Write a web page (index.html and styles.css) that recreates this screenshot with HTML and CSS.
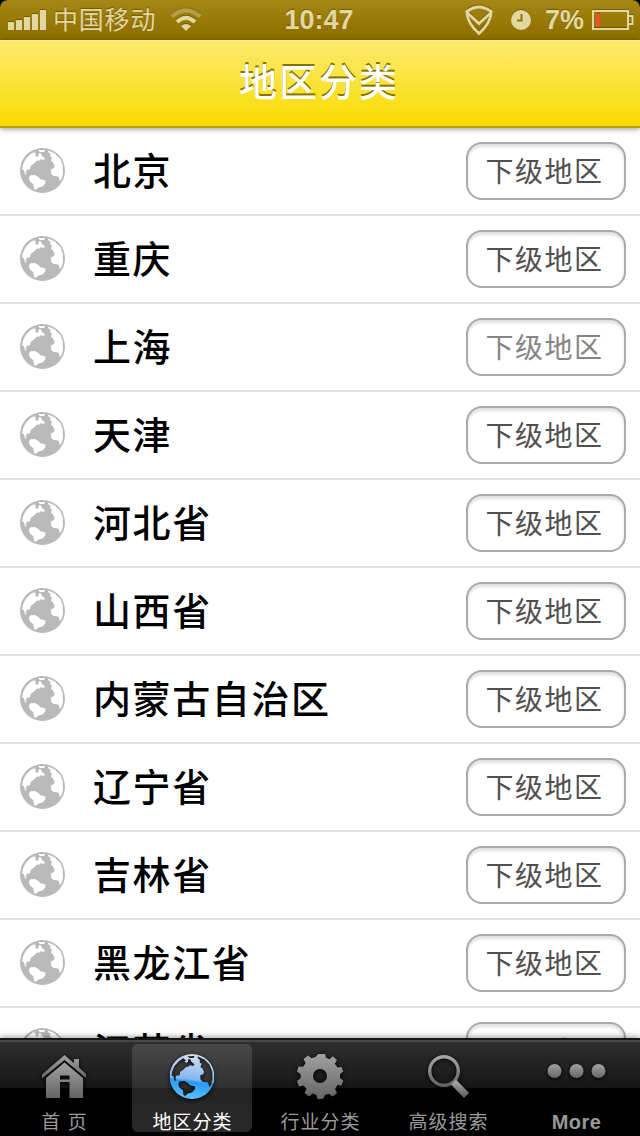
FILE: index.html
```
<!DOCTYPE html>
<html lang="zh-CN">
<head>
<meta charset="utf-8">
<title>地区分类</title>
<link rel="stylesheet" href="styles.css">
</head>
<body>
<svg class="defs" aria-hidden="true">
  <defs>
    <symbol id="globe" viewBox="0 0 45 45">
      <path fill-rule="evenodd" d="M22.5 0A22.5 22.5 0 1 1 22.5 45A22.5 22.5 0 1 1 22.5 0Z
      M14 4L9.500 7L5 12L2.500 18L2.200 22L3.800 22L5 26.500L6.500 26.500L6 23.500L7 21.500L9.500 21.500L10.500 20L10.500 18L14 15.500L16.500 13L19.500 12.500L20.500 11L23 12L25 11L23.500 9L22 8L21 5.500L19 5L18.500 7.500L17 9L15 7.500L16.500 6L15 5.500Z
      M18 2.300L25 2L24 4L20 4Z
      M10 27.500L15 27L19 29.500L20 31L25.500 32.500L25.500 35L22.500 38.500L18.500 39.500L15.500 42L13.800 40.500L13.500 36.500L10 33.500L8.800 30.500Z
      M28 2.200L35 5.500L40 10.500L42.800 17.500L43 26L41.500 31L39.800 33L38.500 28.500L33.500 28L31 25.500L30.800 21.500L34 20L34.500 17.500L33 14.500L31 13L32 10L30 8L30.500 6L28.500 4.500Z"/>
    </symbol>
    <linearGradient id="blue" x1="0" y1="0" x2="-.12" y2="1">
      <stop offset="0" stop-color="#cbdcf5"/><stop offset=".5" stop-color="#84b4ee"/>
      <stop offset=".55" stop-color="#259af5"/><stop offset="1" stop-color="#63c8ff"/>
    </linearGradient>
    <linearGradient id="metal" x1="0" y1="0" x2="0" y2="1">
      <stop offset="0" stop-color="#a3a3a3"/><stop offset="1" stop-color="#646464"/>
    </linearGradient>
    <mask id="globe-mask"><use href="#globe" width="45" height="45" fill="#fff"/></mask>
  </defs>
</svg>
<div class="screen">
  <div class="status">
    <div class="carrier">
      <svg width="38" height="20" viewBox="0 0 38 20" fill="currentColor"><path d="M0 12h6v8H0zM8 10h6v10H8zM16 7h6v13h-6zM24 4h6v16h-6zM32 0h6v20h-6z"/></svg>
      <span class="network">中国移动</span>
      <svg class="wifi" width="32" height="24" viewBox="0 0 32 24"><path d="M2 8.500Q16-4 30 8.500" fill="none" stroke="currentColor" stroke-width="4" opacity=".45"/><path d="M7 14Q16 5.500 25 14" fill="none" stroke="currentColor" stroke-width="4"/><path d="M11 18Q16 14 21 18L16 23Z" fill="currentColor"/></svg>
    </div>
    <span class="time">10:47</span>
    <div class="indicators">
      <svg width="28" height="31" viewBox="0 0 28 31" fill="none" stroke="currentColor" stroke-width="2.800"><path d="M1.800 6.500Q14-2.500 26.200 6.500Q26 18 14 28.500Q2 18 1.800 6.500Z"/><path d="M2.500 8L14 18.500L25.500 8"/></svg>
      <svg class="clock" width="20" height="20" viewBox="0 0 20 20"><circle cx="10" cy="10" r="10" fill="currentColor"/><path d="M10.500 4v6.500H6" fill="none" stroke="#927300" stroke-width="2"/></svg>
      <span class="percent">7%</span>
      <svg class="battery" width="42" height="21" viewBox="0 0 42 21"><path d="M1 1h35v18H1zM37 6h3.500v8H37" fill="none" stroke="currentColor" stroke-width="2"/><path d="M4 3.500h4v13H4z" fill="#ec5424"/></svg>
    </div>
  </div>
  <header class="header"><h1 class="title">地区分类</h1></header>
  <main class="list">
    <div class="row"><svg class="globe"><use href="#globe"/></svg><span class="name">北京</span><button class="sub">下级地区</button></div>
    <div class="row"><svg class="globe"><use href="#globe"/></svg><span class="name">重庆</span><button class="sub">下级地区</button></div>
    <div class="row"><svg class="globe"><use href="#globe"/></svg><span class="name">上海</span><button class="sub sub-dim">下级地区</button></div>
    <div class="row"><svg class="globe"><use href="#globe"/></svg><span class="name">天津</span><button class="sub">下级地区</button></div>
    <div class="row"><svg class="globe"><use href="#globe"/></svg><span class="name">河北省</span><button class="sub">下级地区</button></div>
    <div class="row"><svg class="globe"><use href="#globe"/></svg><span class="name">山西省</span><button class="sub">下级地区</button></div>
    <div class="row"><svg class="globe"><use href="#globe"/></svg><span class="name">内蒙古自治区</span><button class="sub">下级地区</button></div>
    <div class="row"><svg class="globe"><use href="#globe"/></svg><span class="name">辽宁省</span><button class="sub">下级地区</button></div>
    <div class="row"><svg class="globe"><use href="#globe"/></svg><span class="name">吉林省</span><button class="sub">下级地区</button></div>
    <div class="row"><svg class="globe"><use href="#globe"/></svg><span class="name">黑龙江省</span><button class="sub">下级地区</button></div>
    <div class="row"><svg class="globe"><use href="#globe"/></svg><span class="name">江苏省</span><button class="sub">下级地区</button></div>
  </main>
  <nav class="tabs">
    <div class="tab"><svg class="icon" viewBox="0 0 48 48" fill="url(#metal)"><path d="M2 20.500L24.500 1L34 9.200V5h5v8.500L46 20v4L24.500 6L2 24.500Z"/><path fill-rule="evenodd" d="M6 24L24.500 8.500L43 24V44H29.500V28H20V44H6ZM20 21.500V25.500H29.500V21.500Z"/></svg><span class="label">首 页</span></div>
    <div class="tab tab-on"><svg class="icon" viewBox="-1.5 0 48 48"><rect width="45" height="45" fill="url(#blue)" mask="url(#globe-mask)"/></svg><span class="label">地区分类</span></div>
    <div class="tab"><svg class="icon" viewBox="-24 -22 48 48"><defs><mask id="hole"><rect x="-24" y="-24" width="48" height="48" fill="#fff"/><circle r="7" fill="#000"/></mask></defs><g mask="url(#hole)"><path fill="url(#metal)" d="M-.8-23H5L5.800-18.500L9.500-16.800L12.800-19.800L17-16L14.800-12.200L17.500-8.500L21.500-9L23.300-4.500L20-1.800V2L23.300 4.500L21.500 9.500L17.500 9L15 13L17 17L12.500 20.500L9 17.800L5 19L3 23H-2.500L-3.500 19L-7.500 17.500L-11 20.500L-15.500 17L-13.500 12.800L-16.500 9.500L-21 10.500L-23 5L-19.200 2L-19.500-1.800L-23-4.500L-21.500-9.500L-16.800-9.200L-14.500-13L-16.500-17L-12-20.500L-8.500-17.800L-4.500-19Z"/></g></svg><span class="label">行业分类</span></div>
    <div class="tab"><svg class="icon" viewBox="0 0 48 48" fill="none" stroke="url(#metal)"><circle cx="20" cy="17" r="14.300" stroke-width="3.400"/><path d="M29.500 28L42.500 41.500" stroke-width="7"/></svg><span class="label">高级搜索</span></div>
    <div class="tab"><svg class="icon icon-wide" viewBox="0 0 60 48" fill="url(#metal)"><circle cx="8.500" cy="17" r="7"/><circle cx="30.500" cy="17" r="7"/><circle cx="52.500" cy="17" r="7"/></svg><span class="label label-latin">More</span></div>
  </nav>
</div>
</body>
</html>
```
FILE: styles.css
```
* { box-sizing: border-box; }
body { margin: 0; background: #000; font-family: "Liberation Sans", "Noto Sans CJK SC", sans-serif; }
.defs { position: absolute; width: 0; height: 0; }
.screen { width: 640px; height: 1136px; display: flex; flex-direction: column; overflow: hidden; }
.status { height: 40px; flex: none; display: grid; grid-template-columns: 1fr auto 1fr; align-items: center; padding: 0 6px 0 8px; border-radius: 8px 8px 0 0; background: linear-gradient(#a68717, #937300 75%, #907000); color: #e1d7a0; }
.status svg { filter: drop-shadow(0 -1px 0 rgba(70, 50, 0, .45)); }
.carrier, .indicators { display: flex; align-items: center; }
.network { margin-left: 7px; font-size: 25px; letter-spacing: .8px; line-height: 40px; text-shadow: 0 -1px 1px #745900; }
.wifi { margin-left: 14px; }
.time, .percent { font-size: 27px; font-weight: bold; line-height: 40px; text-shadow: 0 -1px 1px #745900; }
.time { padding-right: 4px; }
.indicators { justify-content: flex-end; }
.clock { margin-left: 18px; }
.percent { margin-left: 14px; }
.battery { margin-left: 8px; }
.header { height: 88px; flex: none; display: flex; justify-content: center; background: linear-gradient(#fbea6e, #f9dc06 94%); border-top: 1px solid #ffef8b; border-bottom: 2px solid #b5a000; box-shadow: 0 1px 6px rgba(0, 0, 0, .4); position: relative; }
.title { margin: 0; font-size: 38px; font-weight: 500; line-height: 85px; letter-spacing: 2px; padding-right: 2px; color: #fff; text-shadow: 0 -2px 0 #847300; }
.list { flex: 1; min-height: 0; overflow: hidden; background: #fff; }
.row { height: 88px; display: flex; align-items: center; padding: 0 14px 0 20px; border-bottom: 2px solid #e0e0e0; }
.globe { width: 45px; height: 45px; flex: none; margin-bottom: 1px; fill: #b9b9b9; }
.name { flex: 1; margin-left: 28px; padding-top: 3px; font-size: 38px; font-weight: 500; letter-spacing: 1.600px; line-height: 83px; color: #000; }
.sub { width: 160px; height: 58px; padding: 3px 3px 0 0; border: 2px solid #aaa; border-radius: 16px; background: #fff; box-shadow: inset 0 3px 3px rgba(0, 0, 0, .12); font: 28px/51px "Liberation Sans", "Noto Sans CJK SC", sans-serif; letter-spacing: 1.500px; color: #505050; }
.sub-dim { color: #858585; }
.tabs { height: 98px; flex: none; display: grid; grid-template-columns: repeat(5, 120px); gap: 8px; padding: 4px 4px 4px; border-top: 2px solid #161616; background: linear-gradient(#484848 0 2px, #2e2e2e 2px, #161616 48px, #000 48px); box-shadow: 0 -1px 6px rgba(0, 0, 0, .4); position: relative; }
.tab { height: 88px; display: flex; flex-direction: column; align-items: center; padding-top: 10px; border-radius: 6px; color: #999; }
.tab-on { color: #fff; background: linear-gradient(#484848, #303030 44px, #242424 44px, #292929); }
.icon { width: 48px; height: 48px; flex: none; filter: drop-shadow(0 1px 2px #000); }
.icon-wide { width: 60px; }
.label { margin-top: 7px; padding-left: 1px; font-size: 19px; line-height: 28px; letter-spacing: 1px; white-space: nowrap; }
.label-latin { margin-top: 6px; font-size: 20px; font-weight: bold; letter-spacing: .4px; }
```
